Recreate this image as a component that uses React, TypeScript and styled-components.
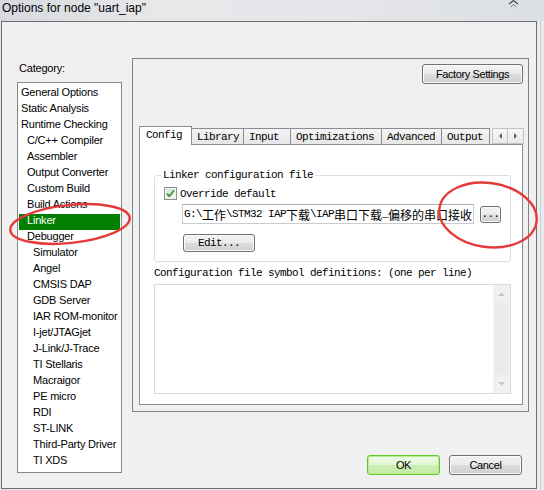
import React from 'react';
import styled, { createGlobalStyle, css } from 'styled-components';

const UI_FONT = `"Liberation Sans", Arial, sans-serif`;
const MONO_FONT = `"Liberation Mono", "Noto Sans CJK SC", monospace`;

const GlobalStyle = createGlobalStyle`
    html, body {
        margin: 0;
        padding: 0;
        background: #e6e8ea;
    }
    body {
        font-family: ${UI_FONT};
        color: #000;
    }
    * {
        box-sizing: border-box;
    }
`

const Window = styled.div`
    width: 544px;
    height: 490px;
    position: relative;
    overflow: hidden;
    display: flex;
    flex-direction: column;
    background: #e6e8ea;
`

const TitleBar = styled.div`
    height: 21px;
    flex: none;
    display: flex;
    justify-content: space-between;
    padding-left: 2px;
    background: linear-gradient(to right, #d6dade 0%, #e7e8ea 30%, #e3e5e8 70%, #dcdfe3 100%);
`

const Title = styled.span`
    font: 12px ${UI_FONT};
    line-height: 17px;
    color: #000;
`

const CloseGlyph = styled.svg`
    margin-right: 25px;
    flex: none;
`

const Body = styled.div`
    flex: 1;
    display: flex;
    min-height: 0;
`

const Client = styled.div`
    width: 536px;
    margin-left: 1px;
    margin-bottom: 1px;
    display: flex;
    gap: 10px;
    padding: 0 7px 0 15px;
    border: 1px solid #6d6d6d;
    background: #f0f0f0;
`

const FrameEdge = styled.div`
    flex: 1;
    background: #eaebed;
    border-left: 3px solid #ededed;
    box-shadow: inset 1px 0 0 #c9cbdc;
`

/* ---------- category list ---------- */

const LeftColumn = styled.div`
    width: 105px;
    flex: none;
    display: flex;
    flex-direction: column;
`

const CategoryLabel = styled.div`
    margin-top: 39px;
    padding-left: 2px;
    font: 11px ${UI_FONT};
    letter-spacing: -0.2px;
    line-height: 14px;
`

const CategoryList = styled.div`
    margin-top: 7px;
    height: 391px;
    padding: 3px 1px 1px;
    border: 1px solid #828790;
    background: #fff;
`

const CategoryItem = styled.div<{ $level: number; $selected?: boolean }>`
    height: 16px;
    line-height: 16px;
    padding-left: ${p => 2 + p.$level * 6}px;
    font: 11px ${UI_FONT};
    letter-spacing: -0.2px;
    white-space: nowrap;
    color: #000;

    ${p => p.$selected && css`
        background: #007f00;
        color: #fff;
    `}
`

/* ---------- options panel ---------- */

const RightColumn = styled.div`
    width: 397px;
    flex: none;
    display: flex;
    flex-direction: column;
`

const Panel = styled.div`
    margin-top: 36px;
    display: flex;
    flex-direction: column;
    padding: 5px 5px 6px 6px;
    border: 1px solid #828282;
`

const TopRow = styled.div`
    display: flex;
    justify-content: flex-end;
`

const Button = styled.button<{ $width: number; $height?: number; $mono?: boolean }>`
    width: ${p => p.$width}px;
    height: ${p => p.$height ?? 20}px;
    flex: none;
    padding: 0;
    margin: 0;
    border: 1px solid #707070;
    border-radius: 3px;
    background: linear-gradient(#f2f2f2 0%, #ebebeb 48%, #dddddd 52%, #cfcfcf 100%);
    box-shadow: inset 0 0 0 1px #fbfbfb;
    color: #000;
    font: 11px ${UI_FONT};
    letter-spacing: -0.4px;
    line-height: 1;
    text-align: center;

    ${p => p.$mono && css`
        font: 11px ${MONO_FONT};
        letter-spacing: -0.6px;
    `}
`

const DefaultButton = styled(Button)`
    border-color: #63c52a;
    background: linear-gradient(#effcea 0%, #e1f7d3 48%, #cdefb6 52%, #c2eba6 100%);
    box-shadow: inset 0 0 0 1px #b8ee8f;
`

const TabArea = styled.div`
    margin-top: 42px;
    display: flex;
    flex-direction: column;
`

const TabStrip = styled.div`
    height: 18px;
    display: flex;
    align-items: flex-end;
    position: relative;
    z-index: 1;
`

const Tab = styled.div<{ $width: number; $active?: boolean }>`
    width: ${p => p.$width}px;
    height: 16px;
    flex: none;
    margin-left: -1px;
    padding-left: 5px;
    padding-top: 1px;
    display: flex;
    align-items: center;
    border: 1px solid #898c95;
    border-bottom: none;
    background: linear-gradient(#f4f4f4, #e6e6e6);
    font: 11px ${MONO_FONT};
    letter-spacing: -0.6px;
    white-space: nowrap;

    &:first-child {
        margin-left: 0;
    }

    ${p => p.$active && css`
        height: 19px;
        margin-bottom: -1px;
        padding-left: 6px;
        padding-top: 0;
        padding-bottom: 2px;
        background: #fff;
    `}
`

const TabScroller = styled.div`
    margin-left: 2px;
    display: flex;
    height: 16px;
`

const ScrollButton = styled.div`
    width: 16px;
    height: 16px;
    display: flex;
    align-items: center;
    justify-content: center;
    border: 1px solid #c3c3c3;
    background: linear-gradient(#f7f7f7, #e9e9e9);

    & + & {
        border-left: none;
    }
`

const TabBody = styled.div`
    height: 261px;
    display: flex;
    flex-direction: column;
    padding: 23px 11px 10px 14px;
    border: 1px solid #898c95;
    background: #fff;
`

const Group = styled.fieldset`
    margin: 0;
    min-width: 0;
    padding: 5px 9px 9px 9px;
    border: 1px solid #d5dfe5;
    border-radius: 3px;
`

const GroupLegend = styled.legend`
    margin-left: -3px;
    padding: 0 2px;
    font: 11px ${MONO_FONT};
    letter-spacing: -0.6px;
    line-height: 14px;
`

const CheckRow = styled.label`
    height: 13px;
    display: flex;
    align-items: center;
    gap: 3px;
    font: 11px ${MONO_FONT};
    letter-spacing: -0.6px;
`

const CheckBox = styled.span`
    width: 13px;
    height: 13px;
    flex: none;
    display: flex;
    align-items: center;
    justify-content: center;
    border: 1px solid #8e8f8f;
    background: linear-gradient(135deg, #dcdcdc, #f7f7f7);
    box-shadow: inset 0 0 0 1px #f3f3f3;
`

const PathRow = styled.div`
    margin-top: 4px;
    margin-left: 18px;
    display: flex;
    align-items: center;
    gap: 6px;
`

const PathField = styled.div`
    width: 292px;
    height: 20px;
    padding-left: 1px;
    display: flex;
    align-items: center;
    overflow: hidden;
    white-space: pre;
    border: 1px solid #c9cbce;
    border-top-color: #abadb3;
    background: #fff;
    font: 11px ${MONO_FONT};
    letter-spacing: -0.6px;
    color: #000;
`

const Cjk = styled.span`
    font: 12px "Noto Sans CJK SC", sans-serif;
    letter-spacing: 0;
`

const EditRow = styled.div`
    margin-top: 10px;
    margin-left: 19px;
    display: flex;
`

const SymbolsLabel = styled.div`
    margin-top: 4px;
    font: 11px ${MONO_FONT};
    letter-spacing: -0.6px;
    line-height: 14px;
    white-space: nowrap;
`

const SymbolsBox = styled.div`
    margin-top: 4px;
    height: 110px;
    display: flex;
    justify-content: flex-end;
    border: 1px solid #dadada;
    background: #fff;
`

const VScroll = styled.div`
    width: 17px;
    display: flex;
    flex-direction: column;
`

const VScrollArrow = styled.div`
    height: 18px;
    display: flex;
    align-items: center;
    justify-content: center;
    background: #f1f1f1;
`

const VScrollTrack = styled.div`
    flex: 1;
    background: #ebebeb;
    box-shadow: inset 1px 0 0 #f6f6f6, inset -1px 0 0 #f6f6f6;
`

const Footer = styled.div`
    margin-top: 43px;
    display: flex;
    justify-content: flex-end;
    gap: 9px;
    padding-right: 7px;
`

const Marks = styled.svg`
    position: absolute;
    left: 0;
    top: 0;
    pointer-events: none;
`

type Category = { name: string; level: number };

const categories: Category[] = [
    { name: 'General Options', level: 0 },
    { name: 'Static Analysis', level: 0 },
    { name: 'Runtime Checking', level: 0 },
    { name: 'C/C++ Compiler', level: 1 },
    { name: 'Assembler', level: 1 },
    { name: 'Output Converter', level: 1 },
    { name: 'Custom Build', level: 1 },
    { name: 'Build Actions', level: 1 },
    { name: 'Linker', level: 1 },
    { name: 'Debugger', level: 1 },
    { name: 'Simulator', level: 2 },
    { name: 'Angel', level: 2 },
    { name: 'CMSIS DAP', level: 2 },
    { name: 'GDB Server', level: 2 },
    { name: 'IAR ROM-monitor', level: 2 },
    { name: 'I-jet/JTAGjet', level: 2 },
    { name: 'J-Link/J-Trace', level: 2 },
    { name: 'TI Stellaris', level: 2 },
    { name: 'Macraigor', level: 2 },
    { name: 'PE micro', level: 2 },
    { name: 'RDI', level: 2 },
    { name: 'ST-LINK', level: 2 },
    { name: 'Third-Party Driver', level: 2 },
    { name: 'TI XDS', level: 2 },
];

const tabs = [
    { label: 'Config', width: 53 },
    { label: 'Library', width: 53 },
    { label: 'Input', width: 48 },
    { label: 'Optimizations', width: 92 },
    { label: 'Advanced', width: 61 },
    { label: 'Output', width: 49 },
];

const linkerPath = 'G:\\工作\\STM32 IAP下载\\IAP串口下载_偏移的串口接收';

const PathText: React.FC<{ value: string }> = ({ value }) => (
    <>
        {value.split(/([\u4e00-\u9fff]+)/).filter(Boolean).map((run, i) =>
            /[\u4e00-\u9fff]/.test(run) ? <Cjk key={i}>{run}</Cjk> : <span key={i}>{run}</span>
        )}
    </>
);

const Triangle: React.FC<{ dir: 'left' | 'right' | 'up' | 'down'; color: string }> = ({ dir, color }) => {
    const points = {
        left: '4,0 4,6 1,3',
        right: '1,0 1,6 4,3',
        up: '0,4 7,4 3.5,0.5',
        down: '0,0 7,0 3.5,3.5',
    }[dir];
    const vertical = dir === 'up' || dir === 'down';
    return (
        <svg width={vertical ? 7 : 5} height={vertical ? 4 : 6} viewBox={vertical ? '0 0 7 4' : '0 0 5 6'}>
            <polygon points={points} fill={color} />
        </svg>
    );
};

const App: React.FC = () => {
    const selected = 'Linker';

    return (
        <Window>
            <GlobalStyle />
            <TitleBar>
                <Title>Options for node "uart_iap"</Title>
                <CloseGlyph width="11" height="7" viewBox="0 0 11 7">
                    <path d="M1 4 L5.5 0.5 L10 4" stroke="#4a4a4a" strokeWidth="1.2" fill="none" />
                    <path d="M2.5 7 L5.5 4.5 L8.5 7" stroke="#7a7a7a" strokeWidth="1" fill="none" />
                </CloseGlyph>
            </TitleBar>

            <Body>
                <Client>
                    <LeftColumn>
                        <CategoryLabel>Category:</CategoryLabel>
                        <CategoryList>
                            {categories.map(c => (
                                <CategoryItem key={c.name} $level={c.level} $selected={c.name === selected}>
                                    {c.name}
                                </CategoryItem>
                            ))}
                        </CategoryList>
                    </LeftColumn>

                    <RightColumn>
                        <Panel>
                            <TopRow>
                                <Button $width={101}>Factory Settings</Button>
                            </TopRow>

                            <TabArea>
                                <TabStrip>
                                    {tabs.map((t, i) => (
                                        <Tab key={t.label} $width={t.width} $active={i === 0}>{t.label}</Tab>
                                    ))}
                                    <TabScroller>
                                        <ScrollButton><Triangle dir="left" color="#4d5f86" /></ScrollButton>
                                        <ScrollButton><Triangle dir="right" color="#4d5f86" /></ScrollButton>
                                    </TabScroller>
                                </TabStrip>

                                <TabBody>
                                    <Group>
                                        <GroupLegend>Linker configuration file</GroupLegend>
                                        <CheckRow>
                                            <CheckBox>
                                                <svg width="9" height="9" viewBox="0 0 9 9">
                                                    <path d="M1 4.6 L3.4 7.2 L8 1.2" stroke="#2f9e2f" strokeWidth="1.8" fill="none" />
                                                </svg>
                                            </CheckBox>
                                            Override default
                                        </CheckRow>
                                        <PathRow>
                                            <PathField><PathText value={linkerPath} /></PathField>
                                            <Button $width={21} $height={17} $mono>...</Button>
                                        </PathRow>
                                        <EditRow>
                                            <Button $width={72} $height={18} $mono>Edit...</Button>
                                        </EditRow>
                                    </Group>

                                    <SymbolsLabel>Configuration file symbol definitions: (one per line)</SymbolsLabel>
                                    <SymbolsBox>
                                        <VScroll>
                                            <VScrollArrow><Triangle dir="up" color="#c6c6c6" /></VScrollArrow>
                                            <VScrollTrack />
                                            <VScrollArrow><Triangle dir="down" color="#c6c6c6" /></VScrollArrow>
                                        </VScroll>
                                    </SymbolsBox>
                                </TabBody>
                            </TabArea>
                        </Panel>

                        <Footer>
                            <DefaultButton $width={73}>OK</DefaultButton>
                            <Button $width={73}>Cancel</Button>
                        </Footer>
                    </RightColumn>
                </Client>
                <FrameEdge />
            </Body>

            <Marks width="544" height="490" viewBox="0 0 544 490">
                <ellipse cx="70" cy="224" rx="60" ry="19" transform="rotate(-6 70 224)"
                         fill="none" stroke="#e53a3a" strokeWidth="2.4" />
                <ellipse cx="488" cy="215" rx="49" ry="32" transform="rotate(8 488 215)"
                         fill="none" stroke="#e53a3a" strokeWidth="2.4" />
            </Marks>
        </Window>
    );
};

export default App;
